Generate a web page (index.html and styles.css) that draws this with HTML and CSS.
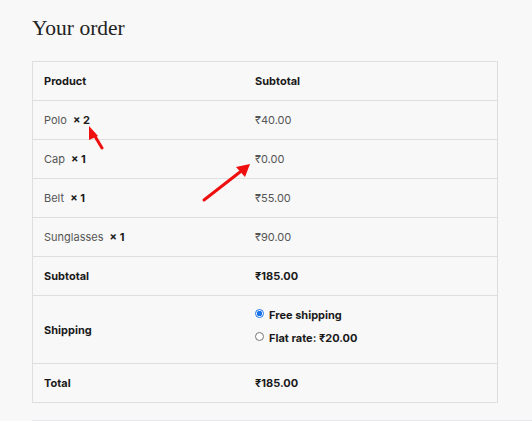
FILE: index.html
```html
<!DOCTYPE html>
<html>
<head>
<meta charset="utf-8">
<link rel="stylesheet" href="styles.css">
</head>
<body>
<div class="page">
  <h3 class="title">Your order</h3>
  <table class="order">
    <thead>
      <tr><th class="c1">Product</th><th class="c2">Subtotal</th></tr>
    </thead>
    <tbody>
      <tr><td>Polo <strong class="qty">× 2</strong></td><td>₹40.00</td></tr>
      <tr><td>Cap <strong class="qty">× 1</strong></td><td>₹0.00</td></tr>
      <tr><td>Belt <strong class="qty">× 1</strong></td><td>₹55.00</td></tr>
      <tr><td>Sunglasses <strong class="qty">× 1</strong></td><td>₹90.00</td></tr>
    </tbody>
    <tfoot>
      <tr><th>Subtotal</th><td class="strong">₹185.00</td></tr>
      <tr class="ship"><th>Shipping</th>
        <td>
          <ul class="methods">
            <li><span class="radio on"></span><label>Free shipping</label></li>
            <li><span class="radio"></span><label>Flat rate: ₹20.00</label></li>
          </ul>
        </td>
      </tr>
      <tr><th>Total</th><td class="strong">₹185.00</td></tr>
    </tfoot>
  </table>
  <div class="next"></div>
</div>
<svg class="arrows" width="532" height="421" viewBox="0 0 532 421">
  <line x1="102" y1="148" x2="93" y2="133" stroke="#f00f0f" stroke-width="3" stroke-linecap="round"/>
  <polygon points="89,126 98,136 89,140" fill="#f00f0f"/>
  <line x1="204" y1="200" x2="240" y2="172" stroke="#f00f0f" stroke-width="3" stroke-linecap="round"/>
  <polygon points="250,164 245,177 236,167" fill="#f00f0f"/>
</svg>
</body>
</html>
```
FILE: styles.css
```css
html, body {
  margin: 0;
  padding: 0;
  background: #f8f8f8;
}
body {
  position: relative;
  width: 532px;
  height: 421px;
  overflow: hidden;
  font-family: Inter, "Noto Sans", sans-serif;
  font-size: 11px;
  color: #555;
}
.page {
  padding: 16px 0 0 32px;
}
.title {
  margin: 0 0 20px 0;
  font-family: "Liberation Serif", serif;
  font-weight: normal;
  font-size: 21.5px;
  line-height: 25px;
  color: #222;
}
.order {
  width: 466px;
  border-collapse: collapse;
  border: 1px solid #dedede;
  table-layout: fixed;
}
.order th, .order td {
  border-top: 1px solid #dedede;
  height: 38px;
  padding: 0 12px 0 11px;
  text-align: left;
  vertical-align: middle;
}
.order th {
  font-weight: 700;
  color: #1a1a1a;
}
.c1 { width: 188px; }
.qty {
  font-weight: 700;
  color: #1a1a1a;
  margin-left: 3px;
}
.strong {
  font-weight: 700;
  color: #1a1a1a;
}
.ship th, .ship td { height: 67px; }
.methods {
  list-style: none;
  margin: 0;
  padding: 0 0 6px 0;
}
.methods li {
  display: flex;
  align-items: center;
  height: 23px;
  font-weight: 700;
  color: #1a1a1a;
}
.radio {
  width: 7px;
  height: 7px;
  border: 1px solid #777;
  border-radius: 50%;
  background: #fff;
  margin-right: 5px;
  margin-top: -4px;
  box-sizing: content-box;
}
.radio.on {
  border-color: #1a73e8;
  background: radial-gradient(circle, #1a73e8 0 2.5px, #fff 3px);
}
.next {
  margin-top: 17px;
  height: 6px;
  background: #e8e8ee;
}
.arrows {
  position: absolute;
  left: 0;
  top: 0;
}
```
